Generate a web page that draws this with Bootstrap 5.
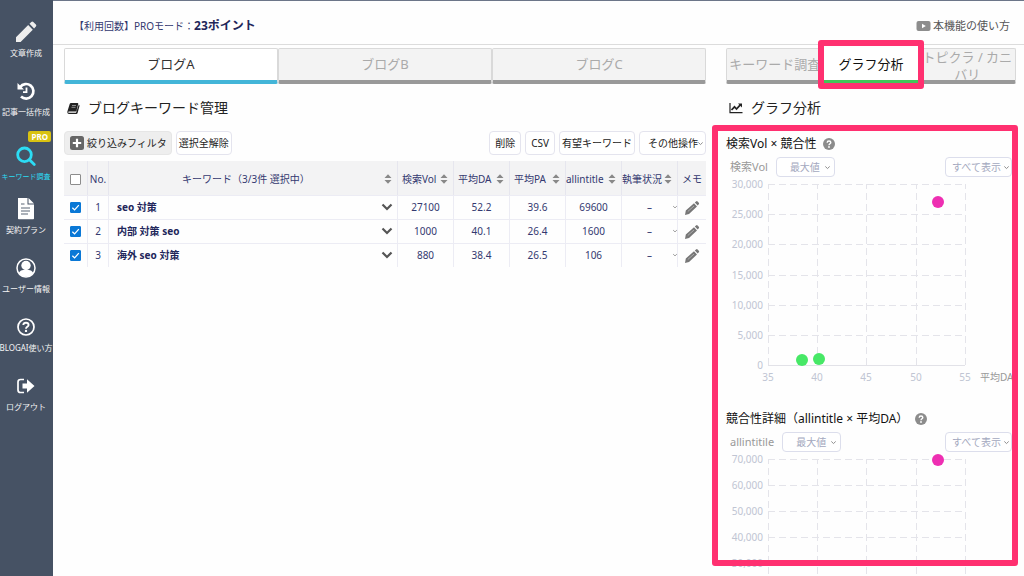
<!DOCTYPE html>
<html lang="ja">
<head>
<meta charset="utf-8">
<meta name="viewport" content="width=device-width, initial-scale=1">
<title>ブログキーワード管理</title>
<link rel="stylesheet" href="https://cdn.jsdelivr.net/npm/bootstrap@5.3.0/dist/css/bootstrap.min.css">
<style>
:root { --navy:#343970; --line:#e3e3e6; --pink:#ff3070; --soft:#f4f4f4; }
body { font-family:"Noto Sans","Noto Sans CJK JP",sans-serif; font-size:10px; line-height:16px; color:#333; background:#fefefe; }
button, select, input { font-family:inherit; }
svg { display:block; flex:none; }

.side-menu { width:53px; background:#465264; padding:11px 1px 0 0; }
.side-item { height:59px; padding-top:9px; font-size:8px; line-height:12px; color:#f4f4f4; text-decoration:none; white-space:nowrap; }
.side-item svg { margin-bottom:3px; }
.side-item.current { padding-top:15px; font-size:7px; color:#2cdcf4; }
.pro-tag { top:2px; right:1px; padding:0 3px; border-radius:2px; background:#d9c211; color:#fff; font-size:8px; font-weight:700; line-height:11px; }

.top-bar { height:45px; border-top:1px solid #6c7689; border-bottom:1px solid #dcdcdc; padding:6px 14px 0 21px; color:var(--navy); }
.top-bar strong { font-size:12px; color:#22265a; }
.top-bar a { font-size:11px; color:#555; text-decoration:none; gap:2px; }

.work-area { display:grid; grid-template-columns:minmax(0,1fr) 290px; grid-template-rows:minmax(0,1fr); gap:20px; min-height:0; padding:3px 8px 0 11px; }
.tab-strip { height:36px; }
.tab-strip button { flex:1 1 0; min-width:0; padding:0; border:1px solid #d9d9d9; border-bottom:4px solid #999; border-radius:2px; background:#f3f3f3; color:#aaa; font-size:13px; line-height:17px; overflow:hidden; }
.tab-strip .tab-on { background:#fff; color:#333; border-bottom-color:#43b5d8; }
.tab-strip .tab-green { border-color:#fff #fff #42c558; color:#111; border-radius:0; }
.tab-slot { flex:1 1 0; min-width:0; }
.tab-long { align-items:flex-start; }
.marker { border:6px solid var(--pink); border-radius:3px; pointer-events:none; z-index:5; }
.tab-marker { inset:-8px -5px -5px -5px; }
.panel-title { font-size:14px; line-height:20px; margin:0; height:47px; padding:0 0 0 3px; gap:8px; color:#222; font-weight:400; }

.tool-btn { height:24px; padding:0 4px; border:1px solid #e4e4ee; border-radius:4px; background:#fff; color:#222; font-size:10px; line-height:16px; white-space:nowrap; }
.tool-btn.filter { background:#eee; border-color:#e6e6e6; gap:2px; }
.tool-btn.tight { padding:0 2px; }
.tool-btn.roomy { padding:0 5px; }
.pick { appearance:none; border:1px solid #e4e4ee; border-radius:4px; background:#fff url("data:image/svg+xml,%3Csvg xmlns='http://www.w3.org/2000/svg' viewBox='0 0 8 8'%3E%3Cpath d='M1.5 2.8 4 5.2 6.5 2.8' fill='none' stroke='%23888' stroke-width='1.1'/%3E%3C/svg%3E") no-repeat right 2px center/7px 7px; }
.pick.more { width:67px; padding:0 0 0 8px; background-position:right 1px center; }

.kw-table { table-layout:fixed; width:100%; color:var(--navy); margin-top:6px; border-collapse:separate; border-spacing:0; text-align:center; white-space:nowrap; }
.kw-table th { height:34px; padding:2px 0 0; background:#f3f3f4; font-weight:400; border-right:1px solid #e6e6ee; }
.kw-table td { height:24px; padding:0 0 1px; border-right:1px solid #ececf4; border-top:1px solid #ececf4; }
.kw-table th:last-child, .kw-table td:last-child { border-right:0; }
.kw-table .kw { text-align:left; font-weight:700; padding:0 4px 1px 8px; color:#22265a; }
.c-check { width:24px; } .c-no { width:21px; } .c-num { width:56px; } .c-memo { width:28px; }
.kw-table input { appearance:none; display:block; width:11px; height:11px; margin:0 auto; border:1px solid #8c8c8c; border-radius:1px; background:#fff; }
.kw-table input:checked { border-color:#0a78d6; background:#0a78d6 url("data:image/svg+xml,%3Csvg xmlns='http://www.w3.org/2000/svg' viewBox='0 0 10 10'%3E%3Cpath d='M1.5 5.2 4 7.6 8.7 2.4' fill='none' stroke='%23fff' stroke-width='1.4'/%3E%3C/svg%3E") center/9px 9px no-repeat; }
.plain { display:block; padding:0; border:0; background:none; }
.memo-btn { margin:2px auto 0; }
.pick.status { display:block; width:55px; height:20px; border:0; background-color:transparent; background-position:right -1px center; background-size:6px 6px; color:var(--navy); font-size:10px; text-align:center; text-align-last:center; padding:0; }

.chart-block h3 { font-size:12px; line-height:18px; margin:0; gap:7px; color:#111; font-weight:400; }
.chart-tools { margin-top:4px; height:20px; padding-left:4px; color:#999; font-size:11px; }
.chart-tools .pick { height:20px; font-size:10px; color:#a3a8be; border-color:#dcdeec; }
.pick.agg { width:59px; padding:0 0 0 13px; margin-left:8px; background-position:right 3px center; }
.pick.show { width:67px; padding:0 0 0 6px; background-position:right 1px center; margin-right:4px; }
.chart-block + .chart-block { margin-top:23px; }
.chart-area { min-height:0; }
.plot { width:286px; font-size:10px; fill:#c0c5d3; overflow:hidden; }
.plot .grid { fill:none; stroke:#e4e4ea; stroke-width:1; stroke-dasharray:7 4; }
.charts-marker { top:-6px; left:-14px; right:-2px; bottom:10px; }
</style>
</head>
<body class="d-flex vh-100 overflow-hidden">
<nav class="side-menu flex-shrink-0 d-flex flex-column" aria-label="メインメニュー">
  <a class="side-item d-flex flex-column align-items-center" href="#"><svg width="24" height="24" viewBox="0 0 24 24" fill="#eee"><path d="M2 17.3 14.2 5.1l4.600 4.600L6.600 21.900H2zM15.500 3.800l1.800-1.800q1-.8 2 0l2.600 2.600q.9 1 0 2l-1.800 1.800z"/></svg>文章作成</a>
  <a class="side-item d-flex flex-column align-items-center" href="#"><svg width="24" height="24" viewBox="0 0 24 24" fill="none" stroke="#fff"><path d="M6.200 8A7.300 7.300 0 1 1 7 17.500" stroke-width="2.700"/><path d="M3.500 4v6.500H10z" fill="#fff" stroke="none"/><path d="M12.500 8.500v4.700H9" stroke-width="1.800"/></svg>記事一括作成</a>
  <a class="side-item current position-relative d-flex flex-column align-items-center" href="#"><span class="pro-tag position-absolute">PRO</span><svg width="24" height="24" viewBox="0 0 24 24" fill="none" stroke="#2cdcf4" stroke-width="2.800"><circle cx="10.500" cy="10.800" r="6.800"/><path d="m15.500 15.800 4.800 4.800" stroke-linecap="round"/></svg>キーワード調査</a>
  <a class="side-item d-flex flex-column align-items-center" href="#"><svg width="24" height="24" viewBox="0 0 24 24"><path fill="#fff" d="M4 1h9.500v6.500H20V21.500q0 .8-.8.800H4.800q-.8 0-.8-.8zM14.500 1l5.500 5.500h-5.500z"/><path stroke="#5b6676" stroke-width="1.200" d="M7 7h3.500M7 11h9M7 14h9M7 17h7"/></svg>契約プラン</a>
  <a class="side-item d-flex flex-column align-items-center" href="#"><svg width="24" height="24" viewBox="0 0 24 24" fill="#fff"><circle cx="12" cy="12" r="9" fill="none" stroke="#fff" stroke-width="1.500"/><circle cx="12" cy="9.500" r="4.700"/><path d="M4.800 17q1.500-3 4.500-3h5.400q3 0 4.500 3A9 9 0 0 1 4.800 17z"/></svg>ユーザー情報</a>
  <a class="side-item d-flex flex-column align-items-center" href="#"><svg width="24" height="24" viewBox="0 0 24 24" fill="none" stroke="#fff"><circle cx="12" cy="12" r="8" stroke-width="1.700"/><path d="M9.300 10Q9.500 7.800 12 7.800t2.600 2.200c0 1.800-2.600 1.800-2.600 3.700" stroke-width="1.900"/><circle cx="12" cy="15.900" r="1.200" fill="#fff" stroke="none"/></svg>BLOGAI使い方</a>
  <a class="side-item d-flex flex-column align-items-center" href="#"><svg width="24" height="24" viewBox="0 0 24 24"><path d="M10 5.500H6.500Q4 5.500 4 8v8q0 2.500 2.500 2.500H10" fill="none" stroke="#fff" stroke-width="1.700"/><path d="M8.500 9.500H13V5.200l7.500 6.800-7.500 6.800v-4.300H8.500z" fill="#fff"/></svg>ログアウト</a>
</nav>

<main class="flex-grow-1 overflow-hidden d-flex flex-column">
  <header class="top-bar flex-shrink-0 d-flex align-items-center justify-content-between">
    <div class="d-flex align-items-center"><span>【利用回数】PROモード：</span><strong>23ポイント</strong></div>
    <a href="#" class="d-flex align-items-center"><svg width="15" height="12" viewBox="0 0 15 12"><rect x=".5" y="1" width="14" height="10" rx="2" fill="#8d8d8d"/><path d="M6 3.800v4.400L9.800 6z" fill="#fff"/></svg>本機能の使い方</a>
  </header>

  <div class="work-area flex-grow-1">
    <section>
      <div class="tab-strip d-flex">
        <button type="button" class="tab-on">ブログA</button><button type="button">ブログB</button><button type="button">ブログC</button>
      </div>
      <h2 class="panel-title d-flex align-items-center"><svg width="13" height="14" viewBox="0 0 13 14"><path d="M4 2h6.500q1 0 .7 1L9.500 9.800q-.3.800-1 .8H2q-1 0-.8.600.2.500 1 .5h6.800L11.800 3.500q1 .5.700 1.500L10.600 12q-.3 1-1.300 1H1.800Q0 12.600.3 10.800L2.700 3Q3 2 4 2z" fill="#222"/><path d="M5 4.500h4M4.500 6.300h4" stroke="#aaa" stroke-width=".8"/></svg>ブログキーワード管理</h2>
      <div class="d-flex gap-1">
        <button type="button" class="tool-btn filter d-flex align-items-center"><svg width="16" height="16" viewBox="0 0 16 16"><rect x="1" y="1" width="14" height="14" rx="2.500" fill="#666"/><path d="M8 3.800v8.400M3.800 8h8.400" stroke="#fff" stroke-width="2.200"/></svg>絞り込みフィルタ</button>
        <button type="button" class="tool-btn tight me-auto">選択全解除</button>
        <button type="button" class="tool-btn roomy">削除</button>
        <button type="button" class="tool-btn roomy">CSV</button>
        <button type="button" class="tool-btn tight">有望キーワード</button>
        <select class="tool-btn pick more" aria-label="その他操作"><option>その他操作</option></select>
      </div>
      <table class="kw-table">
        <colgroup><col class="c-check"><col class="c-no"><col><col class="c-num"><col class="c-num"><col class="c-num"><col class="c-num"><col class="c-num"><col class="c-memo"></colgroup>
        <thead><tr>
          <th><input type="checkbox" aria-label="すべて選択"></th><th>No.</th>
          <th><div class="d-flex align-items-center pe-1"><span class="flex-grow-1">キーワード（3/3件 選択中）</span><svg width="10" height="12" viewBox="0 0 10 12"><path id="sort" d="M1.500 5 5 1.200 8.500 5zM1.500 7 5 10.800 8.500 7z" fill="#888"/></svg></div></th>
          <th><div class="d-flex align-items-center justify-content-between px-1"><span>検索Vol</span><svg width="10" height="12"><use href="#sort"/></svg></div></th>
          <th><div class="d-flex align-items-center justify-content-between px-1"><span>平均DA</span><svg width="10" height="12"><use href="#sort"/></svg></div></th>
          <th><div class="d-flex align-items-center justify-content-between px-1"><span>平均PA</span><svg width="10" height="12"><use href="#sort"/></svg></div></th>
          <th><div class="d-flex align-items-center justify-content-between pe-1"><span>allintitle</span><svg width="10" height="12"><use href="#sort"/></svg></div></th>
          <th><div class="d-flex align-items-center justify-content-between pe-1"><span>執筆状況</span><svg width="10" height="12"><use href="#sort"/></svg></div></th>
          <th>メモ</th>
        </tr></thead>
        <tbody>
          <tr><td><input type="checkbox" checked aria-label="1を選択"></td><td>1</td>
            <td class="kw"><div class="d-flex justify-content-between align-items-center">seo 対策<button type="button" class="plain" aria-label="詳細"><svg width="12" height="10" viewBox="0 0 12 10"><path id="chev" d="m1.500 2.500 4.500 4.500 4.500-4.500" fill="none" stroke="#555" stroke-width="2.200"/></svg></button></div></td>
            <td>27100</td><td>52.2</td><td>39.6</td><td>69600</td><td><select class="pick status" aria-label="執筆状況 1"><option>–</option></select></td>
            <td><button type="button" class="plain memo-btn" aria-label="メモ 1"><svg width="16" height="16" viewBox="0 0 16 16"><g id="pen"><path d="M1 15l.8-4.500L10 3.200 13 6.400 5 14zM10.800 2.500 12 1.400q.8-.7 1.600 0l1.200 1.300q.7.800 0 1.600L13.700 5.500z" fill="#777"/><path d="M3.800 11.500 10 6" stroke="#bbb" stroke-width=".8"/></g></svg></button></td></tr>
          <tr><td><input type="checkbox" checked aria-label="2を選択"></td><td>2</td>
            <td class="kw"><div class="d-flex justify-content-between align-items-center">内部 対策 seo<button type="button" class="plain" aria-label="詳細"><svg width="12" height="10"><use href="#chev"/></svg></button></div></td>
            <td>1000</td><td>40.1</td><td>26.4</td><td>1600</td><td><select class="pick status" aria-label="執筆状況 2"><option>–</option></select></td>
            <td><button type="button" class="plain memo-btn" aria-label="メモ 2"><svg width="16" height="16"><use href="#pen"/></svg></button></td></tr>
          <tr><td><input type="checkbox" checked aria-label="3を選択"></td><td>3</td>
            <td class="kw"><div class="d-flex justify-content-between align-items-center">海外 seo 対策<button type="button" class="plain" aria-label="詳細"><svg width="12" height="10"><use href="#chev"/></svg></button></div></td>
            <td>880</td><td>38.4</td><td>26.5</td><td>106</td><td><select class="pick status" aria-label="執筆状況 3"><option>–</option></select></td>
            <td><button type="button" class="plain memo-btn" aria-label="メモ 3"><svg width="16" height="16"><use href="#pen"/></svg></button></td></tr>
        </tbody>
      </table>
    </section>

    <aside class="d-flex flex-column">
      <div class="tab-strip d-flex flex-shrink-0">
        <button type="button">キーワード調査</button>
        <div class="tab-slot position-relative d-flex"><button type="button" class="tab-on tab-green">グラフ分析</button><span class="marker tab-marker position-absolute"></span></div>
        <button type="button" class="tab-long d-flex justify-content-center">トピクラ / カニバリ</button>
      </div>
      <h2 class="panel-title d-flex align-items-center flex-shrink-0"><svg width="14" height="12" viewBox="0 0 14 12" fill="none" stroke="#222"><path d="M1 1v9.700h12.500" stroke-width="1.200"/><path d="m2.500 8 3-3.200L7.500 7l4-4.300" stroke-width="1.700"/><path d="M9 1.500h4v4z" fill="#222" stroke="none"/></svg>グラフ分析</h2>
      <div class="chart-area position-relative flex-grow-1 pt-1">
        <span class="marker charts-marker position-absolute"></span>
        <section class="chart-block">
          <h3 class="d-flex align-items-center">検索Vol × 競合性 <svg width="12" height="12" viewBox="0 0 12 12"><g id="help"><circle cx="6" cy="6" r="6" fill="#8c8c8c"/><path d="M4.200 4.700Q4.200 3 6 3t1.800 1.500C7.800 5.800 6 5.800 6 7.200" fill="none" stroke="#fff" stroke-width="1.400"/><circle cx="6" cy="9" r=".9" fill="#fff"/></g></svg></h3>
          <div class="chart-tools d-flex align-items-center"><label for="agg1">検索Vol</label><select id="agg1" class="pick agg"><option>最大値</option></select><select class="pick show ms-auto" aria-label="表示範囲"><option>すべて表示</option></select></div>
          <svg class="plot" height="210" viewBox="0 0 286 210" role="img" aria-label="検索Volと平均DAの散布図">
            <path class="grid" d="M42 7.500H239M42 37.500H239M42 67.500H239M42 98.500H239M42 128.500H239M42 158.500H239M42.500 188V7M91.500 188V7M140.500 188V7M190.500 188V7M239.500 188V7"/>
            <path d="M42 188.500H239" stroke="#e2e2e8"/>
            <g text-anchor="end"><text x="37" y="11">30,000</text><text x="37" y="41">25,000</text><text x="37" y="71">20,000</text><text x="37" y="102">15,000</text><text x="37" y="132">10,000</text><text x="37" y="162">5,000</text><text x="37" y="192">0</text></g>
            <g text-anchor="middle"><text x="42" y="204">35</text><text x="91" y="204">40</text><text x="140" y="204">45</text><text x="190" y="204">50</text><text x="239" y="204">55</text></g>
            <text x="254" y="204" fill="#999">平均DA</text>
            <g fill="#47e866"><circle cx="76" cy="183" r="6"/><circle cx="93" cy="182" r="6"/></g><circle cx="212" cy="25" r="6" fill="#ee2fb2"/>
          </svg>
        </section>
        <section class="chart-block">
          <h3 class="d-flex align-items-center">競合性詳細（allintitle × 平均DA） <svg width="12" height="12"><use href="#help"/></svg></h3>
          <div class="chart-tools d-flex align-items-center"><label for="agg2">allintitile</label><select id="agg2" class="pick agg"><option>最大値</option></select><select class="pick show ms-auto" aria-label="表示範囲"><option>すべて表示</option></select></div>
          <svg class="plot" height="210" viewBox="0 0 286 210" role="img" aria-label="allintitleと平均DAの散布図">
            <path class="grid" d="M42 7.500H239M42 33.500H239M42 59.500H239M42 85.500H239M42 111.500H239M42.500 188V7M91.500 188V7M140.500 188V7M190.500 188V7M239.500 188V7"/>
            <g text-anchor="end"><text x="37" y="11">70,000</text><text x="37" y="37">60,000</text><text x="37" y="63">50,000</text><text x="37" y="89">40,000</text><text x="37" y="115">30,000</text></g>
            <circle cx="212" cy="8" r="6" fill="#ee2fb2"/>
          </svg>
        </section>
      </div>
    </aside>
  </div>
</main>
<script src="https://cdn.jsdelivr.net/npm/bootstrap@5.3.0/dist/js/bootstrap.bundle.min.js"></script>
</body>
</html>
